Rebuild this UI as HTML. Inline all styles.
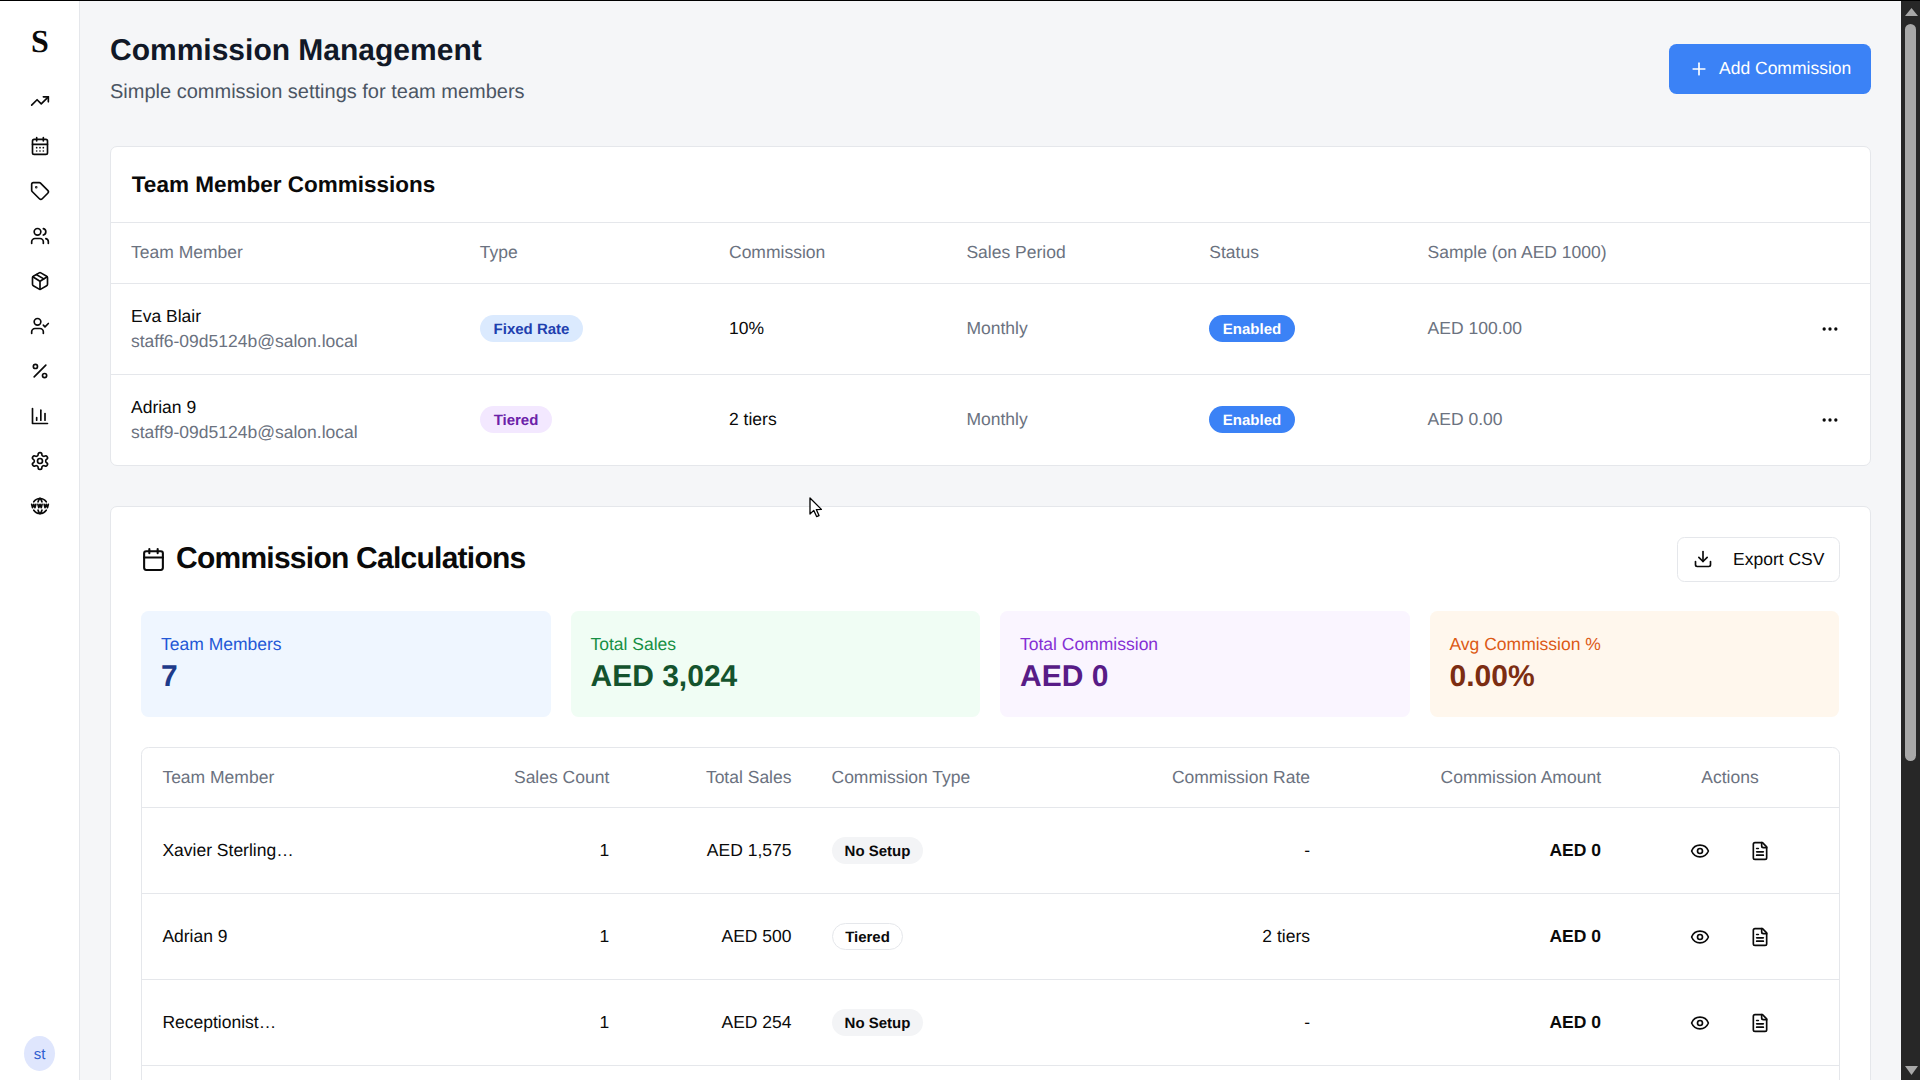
<!DOCTYPE html>
<html><head><meta charset="utf-8">
<style>
*{box-sizing:border-box;margin:0;padding:0}
html,body{width:1920px;height:1080px;overflow:hidden}
body{position:relative;background:#f5f6f8;font-family:"Liberation Sans",sans-serif;color:#0a0a0a;text-rendering:geometricPrecision}
.abs{position:absolute;display:block}
.t{position:absolute;white-space:nowrap;line-height:1}
.card{position:absolute;background:#fff;border:1px solid #e5e7eb;border-radius:7px}
.hl{position:absolute;height:1px;background:#e5e7eb}
.badge{position:absolute;height:27px;border-radius:14px;font-size:15px;font-weight:bold;line-height:27px;padding-top:1px;text-align:center;white-space:nowrap}
</style></head><body>
<div class="abs" style="left:0;top:0;width:1920px;height:1px;background:#000;z-index:9"></div>
<div class="abs" style="left:0;top:0;width:80px;height:1080px;background:#fff;border-right:1px solid #e5e7eb"></div>
<div class="t" style="left:0;width:80px;text-align:center;top:25px;font-family:'Liberation Serif',serif;font-weight:bold;font-size:32px;line-height:32px;color:#0a0a0a">S</div>
<svg class="abs" style="left:30px;top:91px" width="20" height="20" viewBox="0 0 24 24" fill="none" stroke="#0a0a0a" stroke-width="2" stroke-linecap="round" stroke-linejoin="round"><polyline points="22 7 13.5 15.5 8.5 10.5 2 17"/><polyline points="16 7 22 7 22 13"/></svg>
<svg class="abs" style="left:30px;top:136px" width="20" height="20" viewBox="0 0 24 24" fill="none" stroke="#0a0a0a" stroke-width="2" stroke-linecap="round" stroke-linejoin="round"><path d="M8 2v4"/><path d="M16 2v4"/><rect width="18" height="18" x="3" y="4" rx="2"/><path d="M3 10h18"/><path d="M8 14h.01"/><path d="M12 14h.01"/><path d="M16 14h.01"/><path d="M8 18h.01"/><path d="M12 18h.01"/><path d="M16 18h.01"/></svg>
<svg class="abs" style="left:30px;top:181px" width="20" height="20" viewBox="0 0 24 24" fill="none" stroke="#0a0a0a" stroke-width="2" stroke-linecap="round" stroke-linejoin="round"><path d="M12.586 2.586A2 2 0 0 0 11.172 2H4a2 2 0 0 0-2 2v7.172a2 2 0 0 0 .586 1.414l8.704 8.704a2.426 2.426 0 0 0 3.42 0l6.58-6.58a2.426 2.426 0 0 0 0-3.42z"/><circle cx="7.5" cy="7.5" r=".5" fill="#0a0a0a"/></svg>
<svg class="abs" style="left:30px;top:226px" width="20" height="20" viewBox="0 0 24 24" fill="none" stroke="#0a0a0a" stroke-width="2" stroke-linecap="round" stroke-linejoin="round"><path d="M16 21v-2a4 4 0 0 0-4-4H6a4 4 0 0 0-4 4v2"/><circle cx="9" cy="7" r="4"/><path d="M22 21v-2a4 4 0 0 0-3-3.87"/><path d="M16 3.13a4 4 0 0 1 0 7.75"/></svg>
<svg class="abs" style="left:30px;top:271px" width="20" height="20" viewBox="0 0 24 24" fill="none" stroke="#0a0a0a" stroke-width="2" stroke-linecap="round" stroke-linejoin="round"><path d="M11 21.73a2 2 0 0 0 2 0l7-4A2 2 0 0 0 21 16V8a2 2 0 0 0-1-1.73l-7-4a2 2 0 0 0-2 0l-7 4A2 2 0 0 0 3 8v8a2 2 0 0 0 1 1.730z"/><path d="M12 22V12"/><path d="m3.3 7 7.703 4.734a2 2 0 0 0 1.994 0L20.7 7"/><path d="m7.5 4.27 9 5.15"/></svg>
<svg class="abs" style="left:30px;top:316px" width="20" height="20" viewBox="0 0 24 24" fill="none" stroke="#0a0a0a" stroke-width="2" stroke-linecap="round" stroke-linejoin="round"><path d="M16 21v-2a4 4 0 0 0-4-4H6a4 4 0 0 0-4 4v2"/><circle cx="9" cy="7" r="4"/><polyline points="16 11 18 13 22 9"/></svg>
<svg class="abs" style="left:30px;top:361px" width="20" height="20" viewBox="0 0 24 24" fill="none" stroke="#0a0a0a" stroke-width="2" stroke-linecap="round" stroke-linejoin="round"><line x1="19" x2="5" y1="5" y2="19"/><circle cx="6.5" cy="6.5" r="2.5"/><circle cx="17.5" cy="17.5" r="2.5"/></svg>
<svg class="abs" style="left:30px;top:406px" width="20" height="20" viewBox="0 0 24 24" fill="none" stroke="#0a0a0a" stroke-width="2" stroke-linecap="round" stroke-linejoin="round"><path d="M3 3v18h18"/><path d="M18 17V9"/><path d="M13 17V5"/><path d="M8 17v-3"/></svg>
<svg class="abs" style="left:30px;top:451px" width="20" height="20" viewBox="0 0 24 24" fill="none" stroke="#0a0a0a" stroke-width="2" stroke-linecap="round" stroke-linejoin="round"><path d="M12.22 2h-.44a2 2 0 0 0-2 2v.18a2 2 0 0 1-1 1.73l-.43.25a2 2 0 0 1-2 0l-.15-.08a2 2 0 0 0-2.73.73l-.22.38a2 2 0 0 0 .73 2.73l.15.1a2 2 0 0 1 1 1.72v.51a2 2 0 0 1-1 1.74l-.15.09a2 2 0 0 0-.73 2.73l.22.38a2 2 0 0 0 2.730.73l.15-.08a2 2 0 0 1 2 0l.43.25a2 2 0 0 1 1 1.73V20a2 2 0 0 0 2 2h.44a2 2 0 0 0 2-2v-.18a2 2 0 0 1 1-1.73l.43-.25a2 2 0 0 1 2 0l.15.08a2 2 0 0 0 2.73-.73l.22-.39a2 2 0 0 0-.73-2.73l-.15-.08a2 2 0 0 1-1-1.74v-.5a2 2 0 0 1 1-1.74l.15-.09a2 2 0 0 0 .73-2.73l-.22-.38a2 2 0 0 0-2.73-.73l-.15.08a2 2 0 0 1-2 0l-.43-.25a2 2 0 0 1-1-1.73V4a2 2 0 0 0-2-2z"/><circle cx="12" cy="12" r="3"/></svg>
<svg class="abs" style="left:30px;top:496px" width="20" height="20" viewBox="0 0 24 24" fill="none" stroke="#0a0a0a" stroke-width="2" stroke-linecap="round" stroke-linejoin="round"><path d="M19.5 7a9 9 0 0 0 -7.5 -4a8.991 8.991 0 0 0 -7.484 4"/><path d="M11.5 3a16.989 16.989 0 0 0 -1.826 4"/><path d="M12.5 3a16.989 16.989 0 0 1 1.828 4"/><path d="M19.5 17a9 9 0 0 1 -7.5 4a8.991 8.991 0 0 1 -7.484 -4"/><path d="M11.5 21a16.989 16.989 0 0 1 -1.826 -4"/><path d="M12.5 21a16.989 16.989 0 0 0 1.828 -4"/><path d="M2 10l1 4l1.5 -4l1.5 4l1 -4"/><path d="M17 10l1 4l1.5 -4l1.5 4l1 -4"/><path d="M9.5 10l1 4l1.5 -4l1.5 4l1 -4"/></svg>
<div class="abs" style="left:24px;top:1035.5px;width:31px;height:35.5px;border-radius:50%;background:#dfe6fd"></div>
<div class="t" style="left:-160.4px;width:400px;text-align:center;top:1046.90px;font-size:15px;color:#2f5fd0;font-weight:normal;">st</div>
<div class="abs" style="left:1901px;top:0;width:19px;height:1080px;background:#272727;z-index:8"></div>
<div class="abs" style="left:1905px;top:24px;width:11px;height:737px;border-radius:6px;background:#a8a8a8;z-index:8"></div>
<svg class="abs" style="left:1901px;top:0;z-index:8" width="19" height="20"><polygon points="4,16 10.5,8 17,16" fill="#a8a8a8"/></svg>
<svg class="abs" style="left:1901px;top:1060px;z-index:8" width="19" height="20"><polygon points="4,6 10.5,15 17,6" fill="#a8a8a8"/></svg>
<div class="t" style="left:110px;top:36.41px;font-size:30px;color:#111827;font-weight:bold;">Commission Management</div>
<div class="t" style="left:110px;top:81.57px;font-size:20px;color:#4b5563;font-weight:normal;">Simple commission settings for team members</div>
<div class="abs" style="left:1669px;top:44px;width:202px;height:50px;background:#3b82f6;border-radius:7.5px"></div>
<svg class="abs" style="left:1689px;top:59px" width="20" height="20" viewBox="0 0 24 24" fill="none" stroke="#fff" stroke-width="2" stroke-linecap="round" stroke-linejoin="round"><path d="M5 12h14"/><path d="M12 5v14"/></svg>
<div class="t" style="left:1719px;top:60.19px;font-size:17.5px;color:#fff;font-weight:normal;">Add Commission</div>
<div class="card" style="left:110px;top:146px;width:1761px;height:320px"></div>
<div class="t" style="left:131.8px;top:173.55px;font-size:22.5px;color:#0a0a0a;font-weight:bold;">Team Member Commissions</div>
<div class="hl" style="left:111px;top:222px;width:1759px"></div>
<div class="hl" style="left:111px;top:283px;width:1759px"></div>
<div class="hl" style="left:111px;top:374px;width:1759px"></div>
<div class="t" style="left:131px;top:243.89px;font-size:17.5px;color:#6b7280;font-weight:normal;">Team Member</div>
<div class="t" style="left:479.7px;top:243.89px;font-size:17.5px;color:#6b7280;font-weight:normal;">Type</div>
<div class="t" style="left:729px;top:243.89px;font-size:17.5px;color:#6b7280;font-weight:normal;">Commission</div>
<div class="t" style="left:966.4px;top:243.89px;font-size:17.5px;color:#6b7280;font-weight:normal;">Sales Period</div>
<div class="t" style="left:1209.3px;top:243.89px;font-size:17.5px;color:#6b7280;font-weight:normal;">Status</div>
<div class="t" style="left:1427.6px;top:243.89px;font-size:17.5px;color:#6b7280;font-weight:normal;">Sample (on AED 1000)</div>
<div class="t" style="left:131px;top:307.89px;font-size:17.5px;color:#0a0a0a;font-weight:normal;">Eva Blair</div>
<div class="t" style="left:131px;top:332.79px;font-size:17.5px;color:#6b7280;font-weight:normal;">staff6-09d5124b@salon.local</div>
<div class="badge" style="left:480px;top:315px;width:103px;background:#dbeafe;color:#1e40af">Fixed Rate</div>
<div class="t" style="left:729px;top:320.29px;font-size:17.5px;color:#0a0a0a;font-weight:normal;">10%</div>
<div class="t" style="left:966.4px;top:320.29px;font-size:17.5px;color:#6b7280;font-weight:normal;">Monthly</div>
<div class="badge" style="left:1209px;top:315px;width:86px;background:#3b82f6;color:#fff">Enabled</div>
<div class="t" style="left:1427.6px;top:320.29px;font-size:17.5px;color:#6b7280;font-weight:normal;">AED 100.00</div>
<svg class="abs" style="left:1820px;top:319px" width="20" height="20" viewBox="0 0 24 24" fill="none" stroke="#0a0a0a" stroke-width="2" stroke-linecap="round" stroke-linejoin="round"><circle cx="12" cy="12" r="1"/><circle cx="19" cy="12" r="1"/><circle cx="5" cy="12" r="1"/></svg>
<div class="t" style="left:131px;top:398.89px;font-size:17.5px;color:#0a0a0a;font-weight:normal;">Adrian 9</div>
<div class="t" style="left:131px;top:423.79px;font-size:17.5px;color:#6b7280;font-weight:normal;">staff9-09d5124b@salon.local</div>
<div class="badge" style="left:480px;top:406px;width:72px;background:#f3e8ff;color:#6b21a8">Tiered</div>
<div class="t" style="left:729px;top:411.29px;font-size:17.5px;color:#0a0a0a;font-weight:normal;">2 tiers</div>
<div class="t" style="left:966.4px;top:411.29px;font-size:17.5px;color:#6b7280;font-weight:normal;">Monthly</div>
<div class="badge" style="left:1209px;top:406px;width:86px;background:#3b82f6;color:#fff">Enabled</div>
<div class="t" style="left:1427.6px;top:411.29px;font-size:17.5px;color:#6b7280;font-weight:normal;">AED 0.00</div>
<svg class="abs" style="left:1820px;top:410px" width="20" height="20" viewBox="0 0 24 24" fill="none" stroke="#0a0a0a" stroke-width="2" stroke-linecap="round" stroke-linejoin="round"><circle cx="12" cy="12" r="1"/><circle cx="19" cy="12" r="1"/><circle cx="5" cy="12" r="1"/></svg>
<div class="card" style="left:110px;top:506px;width:1761px;height:700px"></div>
<svg class="abs" style="left:141px;top:546.5px" width="25" height="25" viewBox="0 0 24 24" fill="none" stroke="#0a0a0a" stroke-width="2" stroke-linecap="round" stroke-linejoin="round"><path d="M8 2v4"/><path d="M16 2v4"/><rect width="18" height="18" x="3" y="4" rx="2"/><path d="M3 10h18"/></svg>
<div class="t" style="left:176px;top:544.00px;font-size:30px;color:#0a0a0a;font-weight:bold;letter-spacing:-0.75px">Commission Calculations</div>
<div class="abs" style="left:1677px;top:537px;width:163px;height:45px;border:1px solid #e5e7eb;border-radius:7.5px;background:#fff"></div>
<svg class="abs" style="left:1693px;top:549px" width="20" height="20" viewBox="0 0 24 24" fill="none" stroke="#0a0a0a" stroke-width="2" stroke-linecap="round" stroke-linejoin="round"><path d="M21 15v4a2 2 0 0 1-2 2H5a2 2 0 0 1-2-2v-4"/><polyline points="7 10 12 15 17 10"/><line x1="12" x2="12" y1="15" y2="3"/></svg>
<div class="t" style="left:1733px;top:551.19px;font-size:17.5px;color:#0a0a0a;font-weight:normal;">Export CSV</div>
<div class="abs" style="left:141px;top:611px;width:409.5px;height:106px;border-radius:7.5px;background:#eff6ff"></div>
<div class="t" style="left:161px;top:635.79px;font-size:17.5px;color:#2358d6;font-weight:normal;">Team Members</div>
<div class="t" style="left:161px;top:662.31px;font-size:30px;color:#1e3a8a;font-weight:bold;">7</div>
<div class="abs" style="left:570.5px;top:611px;width:409.5px;height:106px;border-radius:7.5px;background:#f0fdf4"></div>
<div class="t" style="left:590.5px;top:635.79px;font-size:17.5px;color:#178f44;font-weight:normal;">Total Sales</div>
<div class="t" style="left:590.5px;top:662.31px;font-size:30px;color:#14532d;font-weight:bold;">AED 3,024</div>
<div class="abs" style="left:1000px;top:611px;width:409.5px;height:106px;border-radius:7.5px;background:#faf5ff"></div>
<div class="t" style="left:1020px;top:635.79px;font-size:17.5px;color:#8530d4;font-weight:normal;">Total Commission</div>
<div class="t" style="left:1020px;top:662.31px;font-size:30px;color:#581c87;font-weight:bold;">AED 0</div>
<div class="abs" style="left:1429.5px;top:611px;width:409.5px;height:106px;border-radius:7.5px;background:#fff7ed"></div>
<div class="t" style="left:1449.5px;top:635.79px;font-size:17.5px;color:#dc5a16;font-weight:normal;">Avg Commission %</div>
<div class="t" style="left:1449.5px;top:662.31px;font-size:30px;color:#7c2d12;font-weight:bold;">0.00%</div>
<div class="abs" style="left:141px;top:747px;width:1699px;height:400px;border:1px solid #e5e7eb;border-radius:7.5px"></div>
<div class="hl" style="left:142px;top:807px;width:1697px"></div>
<div class="hl" style="left:142px;top:893px;width:1697px"></div>
<div class="hl" style="left:142px;top:979px;width:1697px"></div>
<div class="hl" style="left:142px;top:1065px;width:1697px"></div>
<div class="t" style="left:162.4px;top:768.89px;font-size:17.5px;color:#6b7280;font-weight:normal;">Team Member</div>
<div class="t" style="left:209.29999999999995px;width:400px;text-align:right;top:768.89px;font-size:17.5px;color:#6b7280;font-weight:normal;">Sales Count</div>
<div class="t" style="left:391.5px;width:400px;text-align:right;top:768.89px;font-size:17.5px;color:#6b7280;font-weight:normal;">Total Sales</div>
<div class="t" style="left:831.5px;top:768.89px;font-size:17.5px;color:#6b7280;font-weight:normal;">Commission Type</div>
<div class="t" style="left:910px;width:400px;text-align:right;top:768.89px;font-size:17.5px;color:#6b7280;font-weight:normal;">Commission Rate</div>
<div class="t" style="left:1201px;width:400px;text-align:right;top:768.89px;font-size:17.5px;color:#6b7280;font-weight:normal;">Commission Amount</div>
<div class="t" style="left:1530px;width:400px;text-align:center;top:768.89px;font-size:17.5px;color:#6b7280;font-weight:normal;">Actions</div>
<div class="t" style="left:162.4px;top:841.89px;font-size:17.5px;color:#0a0a0a;font-weight:normal;">Xavier Sterling…</div>
<div class="t" style="left:209.29999999999995px;width:400px;text-align:right;top:841.89px;font-size:17.5px;color:#0a0a0a;font-weight:normal;">1</div>
<div class="t" style="left:391.5px;width:400px;text-align:right;top:841.89px;font-size:17.5px;color:#0a0a0a;font-weight:normal;">AED 1,575</div>
<div class="badge" style="left:832px;top:837px;width:91px;background:#f3f4f6;color:#0a0a0a">No Setup</div>
<div class="t" style="left:910px;width:400px;text-align:right;top:841.89px;font-size:17.5px;color:#0a0a0a;font-weight:normal;">-</div>
<div class="t" style="left:1201px;width:400px;text-align:right;top:841.89px;font-size:17.5px;color:#0a0a0a;font-weight:bold;">AED 0</div>
<svg class="abs" style="left:1690px;top:840.5px" width="20" height="20" viewBox="0 0 24 24" fill="none" stroke="#0a0a0a" stroke-width="2" stroke-linecap="round" stroke-linejoin="round"><path d="M2.062 12.348a1 1 0 0 1 0-.696 10.75 10.75 0 0 1 19.876 0 1 1 0 0 1 0 .696 10.75 10.75 0 0 1-19.876 0"/><circle cx="12" cy="12" r="3"/></svg>
<svg class="abs" style="left:1750px;top:840.5px" width="20" height="20" viewBox="0 0 24 24" fill="none" stroke="#0a0a0a" stroke-width="2" stroke-linecap="round" stroke-linejoin="round"><path d="M15 2H6a2 2 0 0 0-2 2v16a2 2 0 0 0 2 2h12a2 2 0 0 0 2-2V7Z"/><path d="M14 2v4a2 2 0 0 0 2 2h4"/><path d="M10 9H8"/><path d="M16 13H8"/><path d="M16 17H8"/></svg>
<div class="t" style="left:162.4px;top:927.89px;font-size:17.5px;color:#0a0a0a;font-weight:normal;">Adrian 9</div>
<div class="t" style="left:209.29999999999995px;width:400px;text-align:right;top:927.89px;font-size:17.5px;color:#0a0a0a;font-weight:normal;">1</div>
<div class="t" style="left:391.5px;width:400px;text-align:right;top:927.89px;font-size:17.5px;color:#0a0a0a;font-weight:normal;">AED 500</div>
<div class="badge" style="left:832px;top:923px;width:71px;border:1px solid #e5e7eb;line-height:25px;padding-top:0.5px;color:#0a0a0a">Tiered</div>
<div class="t" style="left:910px;width:400px;text-align:right;top:927.89px;font-size:17.5px;color:#0a0a0a;font-weight:normal;">2 tiers</div>
<div class="t" style="left:1201px;width:400px;text-align:right;top:927.89px;font-size:17.5px;color:#0a0a0a;font-weight:bold;">AED 0</div>
<svg class="abs" style="left:1690px;top:926.5px" width="20" height="20" viewBox="0 0 24 24" fill="none" stroke="#0a0a0a" stroke-width="2" stroke-linecap="round" stroke-linejoin="round"><path d="M2.062 12.348a1 1 0 0 1 0-.696 10.75 10.75 0 0 1 19.876 0 1 1 0 0 1 0 .696 10.75 10.75 0 0 1-19.876 0"/><circle cx="12" cy="12" r="3"/></svg>
<svg class="abs" style="left:1750px;top:926.5px" width="20" height="20" viewBox="0 0 24 24" fill="none" stroke="#0a0a0a" stroke-width="2" stroke-linecap="round" stroke-linejoin="round"><path d="M15 2H6a2 2 0 0 0-2 2v16a2 2 0 0 0 2 2h12a2 2 0 0 0 2-2V7Z"/><path d="M14 2v4a2 2 0 0 0 2 2h4"/><path d="M10 9H8"/><path d="M16 13H8"/><path d="M16 17H8"/></svg>
<div class="t" style="left:162.4px;top:1013.89px;font-size:17.5px;color:#0a0a0a;font-weight:normal;">Receptionist…</div>
<div class="t" style="left:209.29999999999995px;width:400px;text-align:right;top:1013.89px;font-size:17.5px;color:#0a0a0a;font-weight:normal;">1</div>
<div class="t" style="left:391.5px;width:400px;text-align:right;top:1013.89px;font-size:17.5px;color:#0a0a0a;font-weight:normal;">AED 254</div>
<div class="badge" style="left:832px;top:1009px;width:91px;background:#f3f4f6;color:#0a0a0a">No Setup</div>
<div class="t" style="left:910px;width:400px;text-align:right;top:1013.89px;font-size:17.5px;color:#0a0a0a;font-weight:normal;">-</div>
<div class="t" style="left:1201px;width:400px;text-align:right;top:1013.89px;font-size:17.5px;color:#0a0a0a;font-weight:bold;">AED 0</div>
<svg class="abs" style="left:1690px;top:1012.5px" width="20" height="20" viewBox="0 0 24 24" fill="none" stroke="#0a0a0a" stroke-width="2" stroke-linecap="round" stroke-linejoin="round"><path d="M2.062 12.348a1 1 0 0 1 0-.696 10.75 10.75 0 0 1 19.876 0 1 1 0 0 1 0 .696 10.75 10.75 0 0 1-19.876 0"/><circle cx="12" cy="12" r="3"/></svg>
<svg class="abs" style="left:1750px;top:1012.5px" width="20" height="20" viewBox="0 0 24 24" fill="none" stroke="#0a0a0a" stroke-width="2" stroke-linecap="round" stroke-linejoin="round"><path d="M15 2H6a2 2 0 0 0-2 2v16a2 2 0 0 0 2 2h12a2 2 0 0 0 2-2V7Z"/><path d="M14 2v4a2 2 0 0 0 2 2h4"/><path d="M10 9H8"/><path d="M16 13H8"/><path d="M16 17H8"/></svg>
<svg class="abs" style="left:809px;top:497px;z-index:10" width="14" height="22" viewBox="0 0 14 22"><path d="M1 1 L1 17 L4.8 13.4 L7.6 19.6 L10 18.6 L7.3 12.6 L12.4 12.4 Z" fill="#fff" stroke="#000" stroke-width="1.3" stroke-linejoin="round"/></svg>
</body></html>
